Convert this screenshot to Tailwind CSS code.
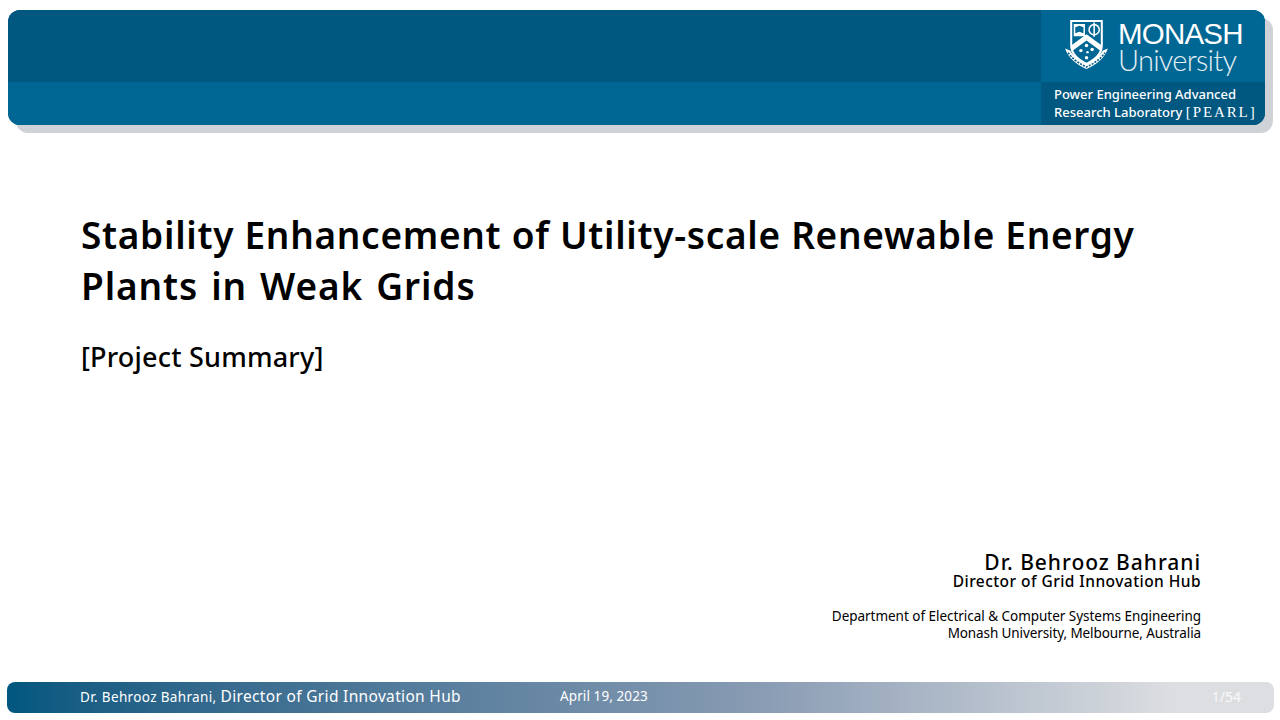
<!DOCTYPE html>
<html lang="en">
<head>
    <meta charset="UTF-8">
    <meta name="viewport" content="width=device-width, initial-scale=1.0">
    <title>Stability Enhancement - Project Summary</title>
    <script src="https://cdn.jsdelivr.net/npm/@tailwindcss/browser@4"></script>
</head>
<body class="w-[1280px] h-[720px] overflow-hidden bg-white text-black font-['Noto_Sans',sans-serif] flex flex-col">
    <!-- header -->
    <header class="ml-2 mr-[15px] mt-2.5 h-[115px] shrink-0 flex rounded-[12px] overflow-hidden shadow-[8px_8px_0_#cfd2d6] bg-[#006693]">
        <div class="flex-1 flex flex-col">
            <div class="h-[72px] bg-[#00577f]"></div>
            <div class="flex-1 bg-[#006693]"></div>
        </div>
        <div class="w-[224px] flex flex-col text-white">
            <div class="h-[72px] bg-[#006693] flex items-start pl-[23px] pt-[9px] gap-[9px]">
                <svg class="w-[45px] h-[51px] shrink-0" viewBox="0 0 44 50" fill="none">
                    <!-- shield -->
                    <path d="M7 2H37V26C37 34 30 40 22 44C14 40 7 34 7 26Z" fill="#006693" stroke="#fff" stroke-width="2"/>
                    <path d="M9.500 5H20.500V17H9.500Z" fill="#fff"/>
                    <path d="M11 8L15 6.500L19 8V14L15 12.500L11 14Z" fill="#006693"/>
                    <circle cx="29.500" cy="10.500" r="5" stroke="#fff" stroke-width="1.500"/>
                    <path d="M29.500 3.500V17.500" stroke="#fff" stroke-width="1.500"/>
                    <!-- chevron -->
                    <path d="M7 26L22 15L37 26V32L22 21L7 32Z" fill="#fff"/>
                    <!-- southern cross -->
                    <circle cx="22" cy="26" r="1.700" fill="#fff"/>
                    <circle cx="16.500" cy="31" r="1.700" fill="#fff"/>
                    <circle cx="27.500" cy="30" r="1.700" fill="#fff"/>
                    <circle cx="23" cy="32.500" r="1.200" fill="#fff"/>
                    <circle cx="22" cy="38" r="1.700" fill="#fff"/>
                    <!-- scroll -->
                    <path d="M1 29C4 38 12 45 22 49C32 45 40 38 43 29L38 31C35 37 28 41 22 44C16 41 9 37 6 31Z" fill="#fff"/>
                    <path d="M4 33C8 39 15 44 22 47C29 44 36 39 40 33" stroke="#00577f" stroke-width="1.500" stroke-dasharray="2 1.200"/>
                </svg>
                <div class="flex flex-col font-['Liberation_Sans',sans-serif]">
                    <span class="text-[29.500px] leading-[29px] tracking-[-0.8px]">MONASH</span>
                    <span class="text-[29px] leading-[24px] tracking-[-0.75px] font-['Lato',sans-serif] font-light text-white/90">University</span>
                </div>
            </div>
            <div class="flex-1 bg-[#00577f] pl-[13px] pt-[3px] text-[13px] leading-[18px] font-medium whitespace-nowrap">
                <p>Power Engineering Advanced</p>
                <p>Research Laboratory <span class="font-['Liberation_Serif',serif] text-[15px] tracking-[1.900px]">[PEARL]</span></p>
            </div>
        </div>
    </header>

    <!-- title slide -->
    <main class="flex-1 flex flex-col pl-[81px] pr-[79px]">
        <h1 class="mt-[84px] text-[37px] leading-[51px] font-semibold tracking-[0.7px]">Stability Enhancement of Utility-scale Renewable Energy<br><span class="tracking-[0.9px] [word-spacing:2.500px]">Plants in Weak Grids</span></h1>
        <p class="mt-[28px] text-[27px] leading-[36px] font-medium tracking-[0.2px]">[Project Summary]</p>
        <div class="mt-auto mb-[40px] text-right">
            <p class="pt-[6px] text-[21px] leading-[18px] font-medium tracking-[0.95px]">Dr. Behrooz Bahrani</p>
            <p class="text-[15.500px] leading-[20px] font-medium tracking-[0.45px]">Director of Grid Innovation Hub</p>
            <p class="mt-[17px] text-[13.500px] leading-[17px] tracking-[-0.03px]">Department of Electrical &amp; Computer Systems Engineering</p>
            <p class="text-[13.500px] leading-[17px] tracking-[-0.1px]">Monash University, Melbourne, Australia</p>
        </div>
    </main>

    <!-- footer -->
    <footer class="ml-[7px] mr-[6px] mb-[7px] h-[31px] pb-[2px] shrink-0 flex items-center rounded-[8px] bg-gradient-to-r from-[#00577f] via-[#889bb3] via-[59%] to-[#dcdee1] to-[92%] text-white whitespace-nowrap">
        <div class="w-[553px] pl-[73px] flex items-baseline gap-1">
            <span class="text-[13.500px] tracking-[0.35px]">Dr. Behrooz Bahrani,</span>
            <span class="text-[15.500px] tracking-[0.33px]">Director of Grid Innovation Hub</span>
        </div>
        <span class="text-[13.500px] tracking-[0.1px]">April 19, 2023</span>
        <span class="ml-auto mr-[33px] text-[14px] text-white/80">1/54</span>
    </footer>
</body>
</html>
